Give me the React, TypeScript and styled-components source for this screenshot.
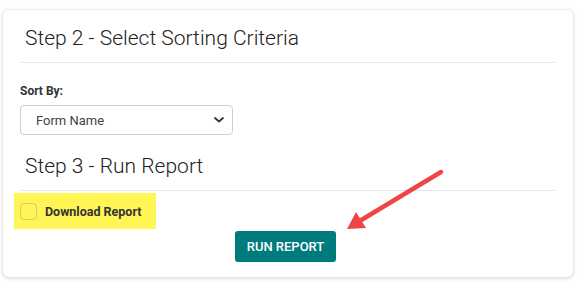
import styled, { createGlobalStyle } from "styled-components";

const GlobalStyle = createGlobalStyle`
  html, body {
    margin: 0;
    padding: 0;
    background: #ffffff;
  }
  body {
    font-family: Roboto, "Liberation Sans", Arial, sans-serif;
    color: #333333;
  }
`;

const Page = styled.div`
  position: relative;
  width: 582px;
  height: 284px;
  padding: 10px 9px 7px 3px;
  box-sizing: border-box;
`;

const Card = styled.div`
  width: 570px;
  height: 267px;
  box-sizing: border-box;
  background: #ffffff;
  border-radius: 6px;
  box-shadow: 0 1px 4px rgba(0, 0, 0, 0.18), 0 0 1px rgba(0, 0, 0, 0.12);
  padding: 15px 17px 15px 17px;
  display: flex;
  flex-direction: column;
`;

const StepTitle = styled.h2<{ $gap?: number }>`
  margin: ${(p) => p.$gap ?? 0}px 0 0 0;
  padding: 0 0 11px 5px;
  font-size: 21px;
  line-height: 26px;
  font-weight: 300;
  color: #222222;
  border-bottom: 1px solid #e6e4ec;
`;

const Field = styled.div`
  display: flex;
  flex-direction: column;
  align-items: flex-start;
  margin-top: 20px;
`;

const Label = styled.label`
  font-size: 12px;
  line-height: 16px;
  font-weight: 700;
  color: #333333;
  margin-bottom: 6px;
`;

const SelectBox = styled.div`
  width: 213px;
  height: 30px;
  box-sizing: border-box;
  border: 1px solid #cfcfcf;
  border-radius: 4px;
  display: flex;
  align-items: center;
  justify-content: space-between;
  padding: 0 7px 0 15px;
  font-size: 13px;
  color: #444444;
`;

const Highlight = styled.div`
  align-self: flex-start;
  margin: 2px 0 0 -6px;
  height: 36px;
  display: inline-flex;
  align-items: center;
  gap: 8px;
  padding: 0 14px 0 6px;
  background: #fff555;
`;

const CheckBox = styled.span`
  width: 17px;
  height: 17px;
  box-sizing: border-box;
  border: 1px solid #d4cd6a;
  border-radius: 4px;
`;

const CheckLabel = styled.span`
  font-size: 12.5px;
  font-weight: 700;
  color: #333333;
`;

const Actions = styled.div`
  display: flex;
  justify-content: center;
  margin-top: 2px;
  padding-right: 5px;
`;

const RunButton = styled.button`
  height: 31px;
  padding: 0 12px;
  border: none;
  border-radius: 3px;
  background: #007b7d;
  color: #ffffff;
  font-family: Roboto, "Liberation Sans", Arial, sans-serif;
  font-size: 13px;
  font-weight: 500;
  cursor: pointer;
`;

const Arrow = styled.svg`
  position: absolute;
  left: 0;
  top: 0;
  pointer-events: none;
`;

export default function App() {
  return (
    <>
      <GlobalStyle />
      <Page>
        <Card>
          <StepTitle>Step 2 - Select Sorting Criteria</StepTitle>
          <Field>
            <Label>Sort By:</Label>
            <SelectBox>
              <span>Form Name</span>
              <svg width="12" height="8" viewBox="0 0 12 8">
                <path
                  d="M2 2 L6 5.5 L10 2"
                  fill="none"
                  stroke="#333"
                  strokeWidth="1.8"
                  strokeLinecap="round"
                  strokeLinejoin="round"
                />
              </svg>
            </SelectBox>
          </Field>
          <StepTitle $gap={18}>Step 3 - Run Report</StepTitle>
          <Highlight>
            <CheckBox />
            <CheckLabel>Download Report</CheckLabel>
          </Highlight>
          <Actions>
            <RunButton>RUN REPORT</RunButton>
          </Actions>
        </Card>
        <Arrow width="582" height="284" viewBox="0 0 582 284">
          <line
            x1="441"
            y1="172"
            x2="358"
            y2="222"
            stroke="#f04545"
            strokeWidth="4.5"
            strokeLinecap="round"
          />
          <polygon points="347,229 356,212 366,228" fill="#f04545" />
        </Arrow>
      </Page>
    </>
  );
}
